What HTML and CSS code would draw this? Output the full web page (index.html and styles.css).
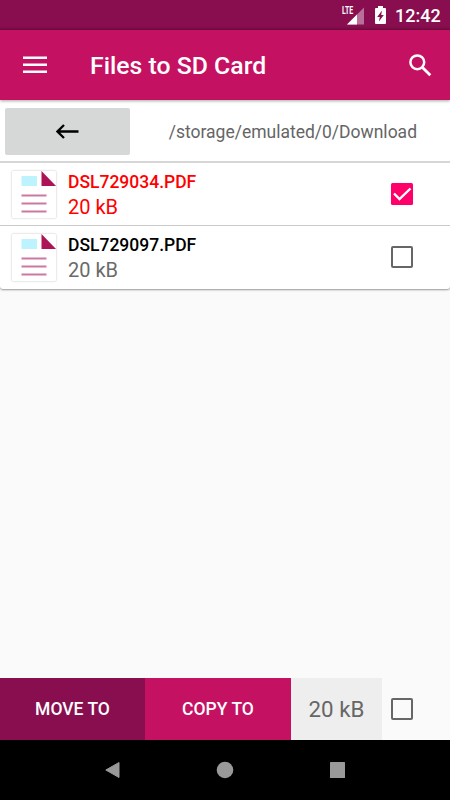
FILE: index.html
```
<!DOCTYPE html>
<html>
<head>
<meta charset="utf-8">
    <title>Files to SD Card</title>
    <link rel="stylesheet" href="styles.css">
</head>
<body>
    <div class="statusbar">
        <svg class="signal" width="23" height="20" viewBox="0 0 23 20">
            <path d="M22 1.5v17H5z" fill="#b8709a"/>
            <path d="M15 8.5v10H5z" fill="#fff"/>
        </svg>
        <span class="lte">LTE</span>
        <svg class="battery" width="11" height="18" viewBox="0 0 11 18">
            <path d="M3 0h5v2h2q1 0 1 1v14q0 1-1 1H1q-1 0-1-1V3q0-1 1-1h2z" fill="#fff"/>
            <path d="M7 4.5L2.2 11h2.6l-.9 4.5L8.8 9H6.2z" fill="#880e4f"/>
        </svg>
        <span class="clock">12:42</span>
    </div>

    <div class="toolbar">
        <svg class="menu" width="24" height="18" viewBox="0 0 24 18">
            <path d="M0 .5h24v2.5H0zM0 7.5h24v2.5H0zM0 14.5h24v2.5H0z" fill="#fff"/>
        </svg>
        <h1 class="title">Files to SD Card</h1>
        <svg class="search" width="23" height="23" viewBox="0 0 23 23">
            <circle cx="8.3" cy="8.3" r="6.9" fill="none" stroke="#fff" stroke-width="2.5"/>
            <path d="M13.5 13.5L21.3 21.3" stroke="#fff" stroke-width="2.8"/>
        </svg>
    </div>

    <div class="pathbar">
        <button type="button" class="back">
            <svg width="23" height="15" viewBox="0 0 23 15">
                <path d="M22.5 7.5H2M8 1L1.5 7.5 8 14" fill="none" stroke="#000" stroke-width="2.3"/>
            </svg>
        </button>
        <span class="path">/storage/emulated/0/Download</span>
    </div>

    <div class="file selected">
        <svg class="doc" width="44" height="47" viewBox="0 0 44 47">
            <path d="M9.5 5h15.5v10H9.5z" fill="#bdf3ff"/>
            <path d="M29.5 0v15h14.5z" fill="#ad1457"/>
            <path d="M9.5 24.5h25M9.5 32.5h25M9.5 40.5h25" stroke="#cb79a2" stroke-width="2"/>
        </svg>
        <div class="info">
            <div class="name">DSL729034.PDF</div>
            <div class="size">20 kB</div>
        </div>
        <svg class="check" width="22" height="22" viewBox="0 0 22 22">
            <rect width="22" height="22" rx="1.5" fill="#ff006a"/>
            <path d="M3 10.5l5.5 5.5L19.5 5.5" fill="none" stroke="#fff" stroke-width="2.4"/>
        </svg>
    </div>

    <div class="file last">
        <svg class="doc" width="44" height="47" viewBox="0 0 44 47">
            <path d="M9.5 5h15.5v10H9.5z" fill="#bdf3ff"/>
            <path d="M29.5 0v15h14.5z" fill="#ad1457"/>
            <path d="M9.5 24.5h25M9.5 32.5h25M9.5 40.5h25" stroke="#cb79a2" stroke-width="2"/>
        </svg>
        <div class="info">
            <div class="name">DSL729097.PDF</div>
            <div class="size">20 kB</div>
        </div>
        <span class="check box"></span>
    </div>

    <div class="space"></div>

    <div class="actions">
        <button type="button" class="move">MOVE TO</button>
        <button type="button" class="copy">COPY TO</button>
        <div class="total">20 kB</div>
        <span class="box all"></span>
    </div>

    <div class="navbar">
        <svg width="16" height="18" viewBox="0 0 16 18">
            <path d="M15 1.5v15L1.8 9z" fill="#999" stroke="#999" stroke-linejoin="round"/>
        </svg>
        <svg width="18" height="18" viewBox="0 0 18 18">
            <circle cx="9" cy="9" r="8.3" fill="#999"/>
        </svg>
        <svg width="16" height="18" viewBox="0 0 16 18">
            <rect x="0" y="1" width="15" height="16" rx="0.5" fill="#999"/>
        </svg>
    </div>
</body>
</html>
```
FILE: styles.css
```
* {
    box-sizing: border-box;
}
body {
    margin: 0;
    width: 450px;
    height: 800px;
    display: flex;
    flex-direction: column;
    background-color: #fafafa;
    font-family: Roboto, sans-serif;
    overflow: hidden;
}
svg {
    display: block;
    flex: none;
}
button {
    border: 0;
    padding: 0;
    font-family: inherit;
}
.statusbar {
    position: relative;
    display: flex;
    align-items: center;
    flex: none;
    height: 30px;
    padding-left: 342px;
    background: linear-gradient(#880e4f 27px, #6f0c40);
    color: #fff;
}
.signal {
    margin-top: 1px;
}
.lte {
    position: absolute;
    left: 342px;
    top: 5px;
    font-size: 10.5px;
    line-height: 11px;
    font-weight: 700;
    transform: scaleX(.66);
    transform-origin: left;
}
.battery {
    margin-left: 10px;
}
.clock {
    margin: 1px 0 0 9px;
    font-size: 18px;
    font-weight: 500;
    line-height: 30px;
}
.toolbar {
    position: relative;
    z-index: 1;
    display: flex;
    align-items: center;
    flex: none;
    height: 70px;
    padding: 0 18px 0 23px;
    background-color: #c51162;
    box-shadow: 0 1px 3px rgba(0, 0, 0, .35);
}
.title {
    flex: 1;
    margin: 0 0 0 43px;
    color: #fff;
    font-size: 24.8px;
    font-weight: 500;
}
.pathbar {
    display: flex;
    align-items: center;
    flex: none;
    height: 63px;
    padding: 0 33px 0 5px;
    background-color: #fff;
    border-bottom: 2px solid #d6d6d6;
}
.back {
    display: flex;
    align-items: center;
    justify-content: center;
    width: 125px;
    height: 47px;
    margin-top: 1px;
    border-radius: 2px;
    background-color: #d6d7d7;
}
.path {
    margin: 3px 0 0 auto;
    color: #656565;
    font-size: 17.5px;
}
.file {
    display: flex;
    flex: none;
    height: 63px;
    padding: 8px 37px 0 12px;
    background-color: #fff;
    border-bottom: 1px solid #cfcfcf;
    color: #000;
}
.last {
    border-bottom: 0;
    border-radius: 0 0 3px 3px;
    box-shadow: 0 1px 2px rgba(0, 0, 0, .4);
}
.doc {
    border-radius: 1px;
    box-shadow: 0 0 2px rgba(0, 0, 0, .3);
}
.info {
    flex: 1;
    margin-left: 12px;
}
.name {
    font-size: 17.5px;
    line-height: 23px;
    font-weight: 500;
}
.size {
    color: #6a6a6a;
    font-size: 20px;
    line-height: 26px;
}
.selected, .selected .size {
    color: #f00;
}
.check {
    margin-top: 12px;
}
.box {
    width: 22px;
    height: 22px;
    border: 2px solid #666;
    border-radius: 2px;
}
.space {
    flex: 1;
}
.actions {
    display: flex;
    align-items: center;
    flex: none;
    height: 62px;
}
.move, .copy {
    width: 145px;
    height: 62px;
    background-color: #880e4f;
    color: #fff;
    font-size: 17.5px;
    font-weight: 500;
}
.copy {
    width: 146px;
    background-color: #c51162;
}
.total {
    width: 91px;
    height: 62px;
    background-color: #eee;
    color: #666;
    font-size: 22.3px;
    line-height: 63px;
    text-align: center;
}
.all {
    margin-left: 9px;
}
.navbar {
    display: flex;
    align-items: center;
    justify-content: space-between;
    flex: none;
    height: 60px;
    padding: 0 104px;
    background-color: #000;
}
```
